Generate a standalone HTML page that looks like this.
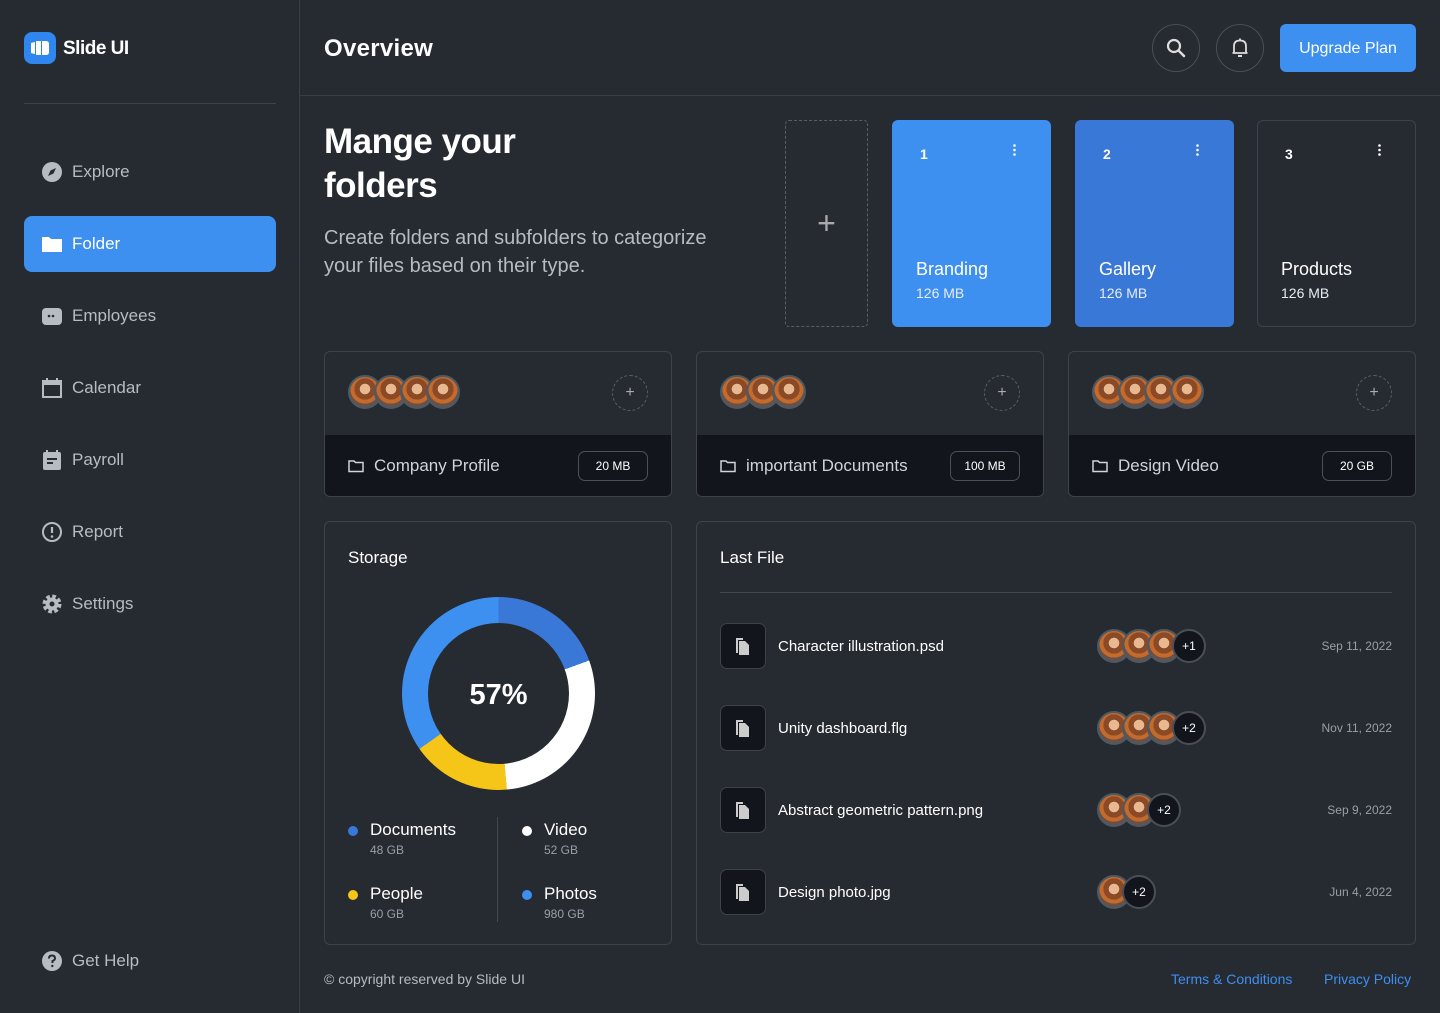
<!DOCTYPE html>
<html><head><meta charset="utf-8"><style>
*{box-sizing:border-box;margin:0;padding:0}
body{width:1440px;height:1013px;background:#262a31;font-family:"Liberation Sans",sans-serif;color:#fff;position:relative;overflow:hidden}
.abs{position:absolute}
.side{left:0;top:0;width:300px;height:1013px;border-right:1px solid #3a3f47}
.nav{position:absolute;left:24px;width:252px;height:56px;border-radius:8px;display:flex;align-items:center;padding-left:17px;font-size:17px;color:#b7bbc3}
.nav svg{width:22px;height:22px;margin-right:9px}
.nav.act{background:#3d8ff0;color:#fff}
.circbtn{width:48px;height:48px;border:1px solid #4a4f57;border-radius:50%;display:flex;align-items:center;justify-content:center}
.fcard{position:absolute;top:120px;width:159px;height:207px;border-radius:6px}
.fcard .n{position:absolute;left:28px;top:26px;font-size:14px;font-weight:bold}
.fcard .d{position:absolute;left:121px;top:24px;width:3px}
.fcard .t{position:absolute;left:24px;top:139px;font-size:18px}
.fcard .s{position:absolute;left:24px;top:165px;font-size:14px;color:#e6ecf5}
.fcard.b .n{left:27px;top:25px}.fcard.b .d{left:120px;top:23px}.fcard.b .t{left:23px;top:138px}.fcard.b .s{left:23px;top:164px}
.gcard{position:absolute;top:351px;width:348px;height:146px;border:1px solid #3e434b;border-radius:6px;overflow:hidden}
.gcard .bot{position:absolute;left:0;right:0;top:83px;bottom:0;background:#12161c;display:flex;align-items:center;padding-left:23px;font-size:17px;color:#cfd3da}
.gcard .pill{position:absolute;right:23px;top:16px;width:70px;height:30px;border:1px solid #4c5058;border-radius:7px;font-size:12px;color:#fff;display:flex;align-items:center;justify-content:center}
.gcard .plus{position:absolute;right:23px;top:23px;width:36px;height:36px;border:1px dashed #5a5f67;border-radius:50%;color:#aaa;display:flex;align-items:center;justify-content:center;font-size:16px}
.av{position:absolute;top:23px;width:34px;height:34px;border-radius:50%;border:2px solid #4a5a66;background:radial-gradient(circle at 50% 40%,#e8b890 0 22%,#8a4a28 23% 45%,#c46a2a 46% 62%,#6b5048 63%)}
.panel{position:absolute;top:521px;height:424px;border:1px solid #3e434b;border-radius:6px}
.lg{position:absolute;font-size:17px}
.lg .dot{position:absolute;left:-22px;top:6px;width:10px;height:10px;border-radius:50%}
.lg .sub{font-size:12px;color:#9a9ea6;margin-top:3px}
.row{position:absolute;left:23px;right:23px;height:46px;display:flex;align-items:center}
.fi{width:46px;height:46px;border:1px solid #3e434b;background:#12161c;border-radius:7px;display:flex;align-items:center;justify-content:center;margin-right:12px}
.row .nm{font-size:15px;color:#fff}
.row .dt{position:absolute;right:0;font-size:12px;color:#9a9ea6}
.sav{position:absolute;top:6px;width:34px;height:34px;border-radius:50%;border:2px solid #4a5a66;background:radial-gradient(circle at 50% 40%,#e8b890 0 22%,#8a4a28 23% 45%,#c46a2a 46% 62%,#6b5048 63%)}
.cnt{position:absolute;top:6px;width:34px;height:34px;border-radius:50%;border:2px solid #4a4f57;background:#12161c;font-size:12px;display:flex;align-items:center;justify-content:center}
</style></head><body>
<div class="abs side">
 <div class="abs" style="left:24px;top:32px;width:32px;height:32px;border-radius:8px;background:#2f86ee;display:flex;align-items:center;justify-content:center">
  <svg width="22" height="16" viewBox="0 0 22 16"><path d="M2 3 L6 2 V14 L2 13Z M7 1 H12 V15 H7Z M13 1 H17 Q20 1 20 4 V12 Q20 15 17 15 H13Z" fill="#fff"/></svg></div>
 <div class="abs" style="left:63px;top:38px;font-size:19px;font-weight:bold;letter-spacing:-0.5px">Slide UI</div>
 <div class="abs" style="left:24px;top:103px;width:252px;height:1px;background:#3e434b"></div>
 <div class="nav" style="top:144px"><svg viewBox="0 0 22 22"><circle cx="11" cy="11" r="10" fill="#b7bbc3"/><path d="M15 7 L12.5 12.5 L7 15 L9.5 9.5Z" fill="#262a31"/></svg>Explore</div>
 <div class="nav act" style="top:216px"><svg viewBox="0 0 22 22"><path d="M1 4 H8 L10 6 H21 V19 H1Z" fill="#fff"/></svg>Folder</div>
 <div class="nav" style="top:288px"><svg viewBox="0 0 22 22"><rect x="1" y="3" width="20" height="17" rx="4" fill="#b7bbc3"/><circle cx="8" cy="11" r="1.3" fill="#262a31"/><circle cx="12" cy="11" r="1.3" fill="#262a31"/></svg>Employees</div>
 <div class="nav" style="top:360px"><svg viewBox="0 0 22 22"><rect x="2" y="4" width="18" height="16" fill="none" stroke="#b7bbc3" stroke-width="2"/><rect x="2" y="4" width="18" height="4" fill="#b7bbc3"/><path d="M6 1V5M16 1V5" stroke="#b7bbc3" stroke-width="2"/></svg>Calendar</div>
 <div class="nav" style="top:432px"><svg viewBox="0 0 22 22"><rect x="2" y="3" width="18" height="18" rx="2" fill="#b7bbc3"/><path d="M6 1V4M16 1V4" stroke="#b7bbc3" stroke-width="2"/><path d="M6 10H16M6 14H12" stroke="#262a31" stroke-width="2"/></svg>Payroll</div>
 <div class="nav" style="top:504px"><svg viewBox="0 0 22 22"><circle cx="11" cy="11" r="9" fill="none" stroke="#b7bbc3" stroke-width="2"/><path d="M11 6V12" stroke="#b7bbc3" stroke-width="2.2"/><circle cx="11" cy="15.5" r="1.3" fill="#b7bbc3"/></svg>Report</div>
 <div class="nav" style="top:576px"><svg viewBox="0 0 22 22"><circle cx="11" cy="11" r="7" fill="none" stroke="#b7bbc3" stroke-width="5" stroke-dasharray="3.3 2.2"/><circle cx="11" cy="11" r="6.5" fill="#b7bbc3"/><circle cx="11" cy="11" r="2.5" fill="#262a31"/></svg>Settings</div>
 <div class="nav" style="top:933px"><svg viewBox="0 0 22 22"><circle cx="11" cy="11" r="10" fill="#b7bbc3"/><path d="M8 8.5 Q8 5.5 11 5.5 Q14 5.5 14 8.3 Q14 10 11.5 11 V13" fill="none" stroke="#262a31" stroke-width="2"/><circle cx="11.3" cy="16" r="1.2" fill="#262a31"/></svg>Get Help</div>
</div>
<div class="abs" style="left:300px;top:95px;width:1140px;height:1px;background:#3a3f47"></div>
<div class="abs" style="left:324px;top:35px;font-size:24px;font-weight:bold;letter-spacing:0.3px">Overview</div>
<div class="abs circbtn" style="left:1152px;top:24px"><svg width="22" height="22" viewBox="0 0 22 22"><circle cx="9" cy="9" r="6" fill="none" stroke="#ddd" stroke-width="2.2"/><path d="M13.5 13.5L19 19" stroke="#ddd" stroke-width="2.5" stroke-linecap="round"/></svg></div>
<div class="abs circbtn" style="left:1216px;top:24px"><svg width="20" height="22" viewBox="0 0 20 22"><path d="M4 16 V9 Q4 3.5 10 3.5 Q16 3.5 16 9 V16 H17.5 M4 16 H2.5 M2.5 16 H17.5" fill="none" stroke="#ddd" stroke-width="1.8"/><path d="M8 19 H12" stroke="#ddd" stroke-width="2"/><path d="M10 1.5V3.5" stroke="#ddd" stroke-width="1.8"/></svg></div>
<div class="abs" style="left:1280px;top:24px;width:136px;height:48px;border-radius:6px;background:#3d8ff0;font-size:16px;display:flex;align-items:center;justify-content:center;padding-top:2px">Upgrade Plan</div>

<div class="abs" style="left:324px;top:120px;font-size:35px;font-weight:bold;line-height:44px;letter-spacing:-0.5px">Mange your<br>folders</div>
<div class="abs" style="left:324px;top:224px;font-size:20px;line-height:28px;color:#b7bbc3;width:415px">Create folders and subfolders to categorize your files based on their type.</div>

<div class="abs" style="left:785px;top:120px;width:83px;height:207px;border:1px dashed #5a5f67;border-radius:4px;display:flex;align-items:center;justify-content:center;font-size:32px;color:#aaa;font-weight:300">+</div>
<div class="fcard" style="left:892px;background:#3d8ff0"><div class="n">1</div><svg class="d" height="12" viewBox="0 0 3 12"><circle cx="1.5" cy="1.5" r="1.3" fill="#fff"/><circle cx="1.5" cy="6" r="1.3" fill="#fff"/><circle cx="1.5" cy="10.5" r="1.3" fill="#fff"/></svg><div class="t">Branding</div><div class="s">126 MB</div></div>
<div class="fcard" style="left:1075px;background:#3a78d8"><div class="n">2</div><svg class="d" height="12" viewBox="0 0 3 12"><circle cx="1.5" cy="1.5" r="1.3" fill="#fff"/><circle cx="1.5" cy="6" r="1.3" fill="#fff"/><circle cx="1.5" cy="10.5" r="1.3" fill="#fff"/></svg><div class="t">Gallery</div><div class="s">126 MB</div></div>
<div class="fcard b" style="left:1257px;border:1px solid #3e434b"><div class="n">3</div><svg class="d" height="12" viewBox="0 0 3 12"><circle cx="1.5" cy="1.5" r="1.3" fill="#fff"/><circle cx="1.5" cy="6" r="1.3" fill="#fff"/><circle cx="1.5" cy="10.5" r="1.3" fill="#fff"/></svg><div class="t">Products</div><div class="s">126 MB</div></div>

<div class="gcard" style="left:324px"><div class="av" style="left:23px"></div><div class="av" style="left:49px"></div><div class="av" style="left:75px"></div><div class="av" style="left:101px"></div><div class="plus">+</div>
<div class="bot"><svg width="16" height="14" viewBox="0 0 16 14" style="margin-right:10px"><path d="M1 2H6L7.5 3.5H15V12.5H1Z" fill="none" stroke="#cfd3da" stroke-width="1.5"/></svg>Company Profile<div class="pill">20 MB</div></div></div>
<div class="gcard" style="left:696px"><div class="av" style="left:23px"></div><div class="av" style="left:49px"></div><div class="av" style="left:75px"></div><div class="plus">+</div>
<div class="bot"><svg width="16" height="14" viewBox="0 0 16 14" style="margin-right:10px"><path d="M1 2H6L7.5 3.5H15V12.5H1Z" fill="none" stroke="#cfd3da" stroke-width="1.5"/></svg>important Documents<div class="pill">100 MB</div></div></div>
<div class="gcard" style="left:1068px"><div class="av" style="left:23px"></div><div class="av" style="left:49px"></div><div class="av" style="left:75px"></div><div class="av" style="left:101px"></div><div class="plus">+</div>
<div class="bot"><svg width="16" height="14" viewBox="0 0 16 14" style="margin-right:10px"><path d="M1 2H6L7.5 3.5H15V12.5H1Z" fill="none" stroke="#cfd3da" stroke-width="1.5"/></svg>Design Video<div class="pill">20 GB</div></div></div>

<div class="panel" style="left:324px;width:348px">
 <div class="abs" style="left:23px;top:26px;font-size:17px">Storage</div>
 <div class="abs" style="left:77px;top:75px;width:193px;height:193px;border-radius:50%;background:conic-gradient(#3a78d8 0 70deg,#fff 70deg 175deg,#f5c518 175deg 235deg,#3d8ff0 235deg 360deg)"></div>
 <div class="abs" style="left:103px;top:101px;width:141px;height:141px;border-radius:50%;background:#262a31;display:flex;align-items:center;justify-content:center;font-size:29px;font-weight:bold;padding-top:3px">57%</div>
 <div class="abs" style="left:172px;top:295px;width:1px;height:105px;background:#42474f"></div>
 <div class="lg" style="left:45px;top:298px"><div class="dot" style="background:#3a78d8"></div>Documents<div class="sub">48 GB</div></div>
 <div class="lg" style="left:219px;top:298px"><div class="dot" style="background:#fff"></div>Video<div class="sub">52 GB</div></div>
 <div class="lg" style="left:45px;top:362px"><div class="dot" style="background:#f5c518"></div>People<div class="sub">60 GB</div></div>
 <div class="lg" style="left:219px;top:362px"><div class="dot" style="background:#3d8ff0"></div>Photos<div class="sub">980 GB</div></div>
</div>

<div class="panel" style="left:696px;width:720px">
 <div class="abs" style="left:23px;top:26px;font-size:17px">Last File</div>
 <div class="abs" style="left:23px;top:70px;width:672px;height:1px;background:#42474f"></div>
 <div class="row" style="top:101px"><div class="fi"><svg width="18" height="20" viewBox="0 0 18 20"><path d="M2 2H9V4H4V17H2Z" fill="#ccc"/><path d="M5 5H11L15 9V19H5Z" fill="#ccc"/></svg></div><div class="nm">Character illustration.psd</div>
  <div class="sav" style="left:377px"></div><div class="sav" style="left:402px"></div><div class="sav" style="left:427px"></div><div class="cnt" style="left:452px">+1</div><div class="dt">Sep 11, 2022</div></div>
 <div class="row" style="top:183px"><div class="fi"><svg width="18" height="20" viewBox="0 0 18 20"><path d="M2 2H9V4H4V17H2Z" fill="#ccc"/><path d="M5 5H11L15 9V19H5Z" fill="#ccc"/></svg></div><div class="nm">Unity dashboard.flg</div>
  <div class="sav" style="left:377px"></div><div class="sav" style="left:402px"></div><div class="sav" style="left:427px"></div><div class="cnt" style="left:452px">+2</div><div class="dt">Nov 11, 2022</div></div>
 <div class="row" style="top:265px"><div class="fi"><svg width="18" height="20" viewBox="0 0 18 20"><path d="M2 2H9V4H4V17H2Z" fill="#ccc"/><path d="M5 5H11L15 9V19H5Z" fill="#ccc"/></svg></div><div class="nm">Abstract geometric pattern.png</div>
  <div class="sav" style="left:377px"></div><div class="sav" style="left:402px"></div><div class="cnt" style="left:427px">+2</div><div class="dt">Sep 9, 2022</div></div>
 <div class="row" style="top:347px"><div class="fi"><svg width="18" height="20" viewBox="0 0 18 20"><path d="M2 2H9V4H4V17H2Z" fill="#ccc"/><path d="M5 5H11L15 9V19H5Z" fill="#ccc"/></svg></div><div class="nm">Design photo.jpg</div>
  <div class="sav" style="left:377px"></div><div class="cnt" style="left:402px">+2</div><div class="dt">Jun 4, 2022</div></div>
</div>

<div class="abs" style="left:324px;top:971px;font-size:14px;color:#b7bbc3">© copyright reserved by Slide UI</div>
<div class="abs" style="left:1171px;top:971px;font-size:14px;color:#3d8ff0">Terms &amp; Conditions</div>
<div class="abs" style="left:1324px;top:971px;font-size:14px;color:#3d8ff0">Privacy Policy</div>
</body></html>
